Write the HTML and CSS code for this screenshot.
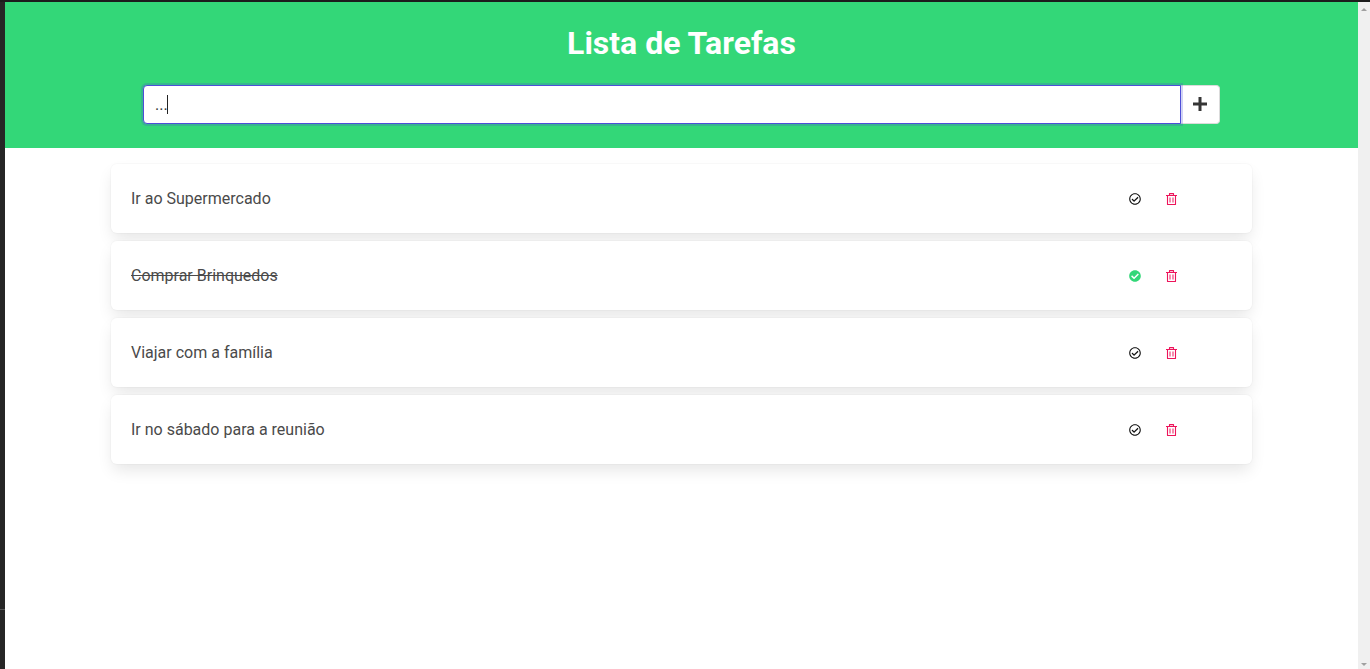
FILE: index.html
```
<!DOCTYPE html>
<html lang="pt-BR">
<head>
<meta charset="utf-8">
<title>Lista de Tarefas</title>
<link rel="stylesheet" href="styles.css">
</head>
<body>
<svg class="symbols" aria-hidden="true">
  <symbol id="check" viewBox="0 0 512 512"><path d="M256 8C119 8 8 119 8 256s111 248 248 248 248-111 248-248S393 8 256 8zm0 48c110 0 200 90 200 200s-90 200-200 200S56 366 56 256 146 56 256 56zm140 135-22-23c-5-5-12-5-17 0L216 308l-59-60c-5-5-13-5-17 0l-23 22c-5 5-5 13 0 17l91 91c4 5 12 5 16 0l172-170c5-5 5-12 0-17z"/></symbol>
  <symbol id="done" viewBox="0 0 512 512"><path d="M504 256c0 137-111 248-248 248S8 393 8 256 119 8 256 8s248 111 248 248zM227 387l184-184c7-6 7-16 0-22l-22-23c-7-6-17-6-23 0L216 308l-70-70c-6-6-16-6-23 0l-22 23c-7 6-7 16 0 22l104 104c6 6 16 6 22 0z"/></symbol>
  <symbol id="trash" viewBox="0 0 12 12"><path d="M3.5 2V.6h4V2M0 2.5h11M1.5 2.5v9h8v-9" fill="none" stroke="currentColor" stroke-width="1.1" stroke-linejoin="round"/><path d="M4 4.5v5M7 4.5v5" stroke="currentColor" stroke-width="1.3" opacity=".75"/></symbol>
</svg>
<div class="window">
  <div class="window-edge"><span class="edge-mark"></span></div>
  <div class="page">
    <header class="header">
      <h1 class="title">Lista de Tarefas</h1>
      <form class="form">
        <div class="field">
          <input class="input" type="text" value="..." aria-label="Nova tarefa">
          <span class="caret"></span>
        </div>
        <button class="add" type="button" aria-label="Adicionar"><svg viewBox="0 0 14 14"><path d="M7 0v14M0 7h14" stroke="currentColor" stroke-width="3"/></svg></button>
      </form>
    </header>
    <main>
      <ul class="list">
        <li class="box"><span class="task">Ir ao Supermercado</span><span class="actions"><button class="icon" type="button" aria-label="Concluir"><svg><use href="#check"/></svg></button><button class="icon remove" type="button" aria-label="Excluir"><svg><use href="#trash"/></svg></button></span></li>
        <li class="box"><span class="task completed">Comprar Brinquedos</span><span class="actions"><button class="icon finished" type="button" aria-label="Reabrir"><svg><use href="#done"/></svg></button><button class="icon remove" type="button" aria-label="Excluir"><svg><use href="#trash"/></svg></button></span></li>
        <li class="box"><span class="task">Viajar com a família</span><span class="actions"><button class="icon" type="button" aria-label="Concluir"><svg><use href="#check"/></svg></button><button class="icon remove" type="button" aria-label="Excluir"><svg><use href="#trash"/></svg></button></span></li>
        <li class="box"><span class="task">Ir no sábado para a reunião</span><span class="actions"><button class="icon" type="button" aria-label="Concluir"><svg><use href="#check"/></svg></button><button class="icon remove" type="button" aria-label="Excluir"><svg><use href="#trash"/></svg></button></span></li>
      </ul>
    </main>
  </div>
  <div class="scrollbar">
    <svg class="arrow" viewBox="0 0 6 3"><path d="M0 3h6L3 0z"/></svg>
    <svg class="arrow" viewBox="0 0 6 3"><path d="M0 0h6L3 3z"/></svg>
  </div>
</div>
</body>
</html>
```
FILE: styles.css
```
* { box-sizing: border-box; }
body {
  margin: 0;
  background: #fff;
  color: #4a4a4a;
  font: 16px/24px Roboto, sans-serif;
}
button { font: inherit; border: 0; cursor: pointer; }
.symbols { display: none; }
.window {
  display: flex;
  min-height: 100vh;
  border-top: 2px solid #1c1c1c;
}
.window-edge {
  display: flex;
  flex-direction: column;
  justify-content: flex-end;
  width: 5px;
  padding-bottom: 59px;
  background: #262626;
}
.edge-mark { height: 1px; background: #555; }
.page { flex: 1; min-width: 0; }
.header {
  padding: 23px 138px 24px;
  background: #33d778;
}
.title {
  margin: 0 0 24px;
  color: #fff;
  font-size: 32px;
  line-height: 36px;
  font-weight: 700;
  text-align: center;
}
.form { display: flex; }
.field { position: relative; flex: 1; z-index: 1; }
.input {
  display: block;
  width: 100%;
  height: 39px;
  padding: 0 11px;
  border: 1px solid #4e4ed8;
  border-radius: 4px 0 0 4px;
  outline: 0;
  background: #fff;
  color: #363636;
  font: inherit;
  box-shadow: 0 0 0 2px rgba(72, 80, 210, .25);
}
.caret {
  position: absolute;
  top: 10px;
  left: 24px;
  width: 1px;
  height: 19px;
  background: #222;
}
.add {
  display: grid;
  place-items: center;
  width: 39px;
  padding: 0 0 2px;
  border: 1px solid #dbdbdb;
  border-left: 0;
  border-radius: 0 4px 4px 0;
  background: #fff;
  color: #363636;
}
.add svg { width: 14px; height: 14px; }
.list {
  display: flex;
  flex-direction: column;
  gap: 8px;
  margin: 0;
  padding: 16px 106px;
  list-style: none;
}
.box {
  display: flex;
  align-items: center;
  justify-content: space-between;
  min-height: 69px;
  padding: 20px 74px 20px 20px;
  border-radius: 6px;
  background: #fff;
  box-shadow: 0 8px 16px -2px rgba(10, 10, 10, .1), 0 0 0 1px rgba(10, 10, 10, .02);
}
.completed { text-decoration: line-through; }
.actions { display: flex; gap: 25px; }
.icon {
  width: 12px;
  height: 12px;
  padding: 0;
  background: none;
  color: #111;
}
.icon svg { display: block; width: 12px; height: 12px; fill: currentColor; }
.finished { color: #33d778; }
.remove { color: #ed145b; }
.scrollbar {
  display: flex;
  flex-direction: column;
  justify-content: space-between;
  align-items: center;
  width: 12px;
  padding: 6px 0 3px;
  background: #f0f0f0;
}
.arrow { width: 6px; height: 3px; fill: #a0a0a0; }
```
